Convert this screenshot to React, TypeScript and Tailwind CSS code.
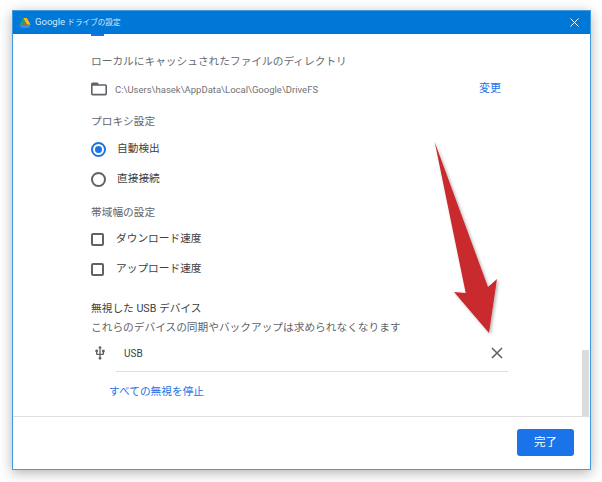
export default function App() {
  const t = "flex items-center text-[#5f6368] text-[10.7px]";
  return (
    <div className="w-[602px] h-[482px] bg-white pl-[12px] pt-[10px] overflow-hidden relative" style={{ fontFamily: 'Roboto, "Noto Sans CJK JP", sans-serif' }}>
      <div className="w-[579px] h-[460px] flex flex-col bg-white border border-[#3f9ae2] shadow-[0_3px_12px_rgba(0,0,0,0.3)]">
        <div className="h-[23px] shrink-0 bg-[#0078d7] flex items-center pl-[6px] pr-[11px]">
          <svg width="12" height="10" viewBox="0 0 24 21">
            <path d="M8 0h8l8 14h-8z" fill="#fbbc04" />
            <path d="M8 0l8 14-4 7L0 14z" fill="#1fa463" />
            <path d="M0 14l4 7h16l4-7z" fill="#4285f4" />
            <path d="M12 8l-4 6h8z" fill="#ea4335" opacity="0.8" />
          </svg>
          <span className="ml-[4px] text-[9.5px] text-[#d7e9f8] whitespace-nowrap">Google <span className="text-[7.6px]">ドライブの設定</span></span>
          <svg className="ml-auto" width="9" height="9" viewBox="0 0 9 9" stroke="#fff" strokeWidth="1">
            <path d="M0.5 0.5l8 8M8.5 0.5l-8 8" />
          </svg>
        </div>

        <div className="flex-1 min-h-0 flex">
          <div className="flex-1 pl-[78px] pr-[81px] flex flex-col">
            <div className="flex h-[2px]">
              <div className="w-[13px] h-[2px] bg-[#1a73e8]" />
            </div>
            <div className={`${t} h-[20px] mt-[16px] text-[#666a6e]`}>ローカルにキャッシュされたファイルのディレクトリ</div>
            <div className="h-[20px] mt-[7px] flex items-center">
              <svg width="16" height="16" viewBox="2 2 20 20" fill="#5f6368">
                <path d="M20 6h-8l-2-2H4c-1.1 0-1.99.9-1.99 2L2 18c0 1.1.9 2 2 2h16c1.1 0 2-.9 2-2V8c0-1.1-.9-2-2-2zm0 12H4V8h16v10z" />
              </svg>
              <span className="ml-[8px] pt-[2px] text-[9.5px] text-[#6f7276]">C:\Users\hasek\AppData\Local\Google\DriveFS</span>
              <span className="ml-auto text-[11px] text-[#1a73e8]">変更</span>
            </div>
            <div className={`${t} h-[20px] mt-[13px]`}>プロキシ設定</div>
            <div className="h-[20px] mt-[7px] flex items-center">
              <div className="w-[15px] h-[15px] rounded-full border-[2px] border-[#1a73e8] flex items-center justify-center">
                <div className="w-[7px] h-[7px] rounded-full bg-[#1a73e8]" />
              </div>
              <span className="ml-[11px] text-[10.7px] text-[#3c4043]">自動検出</span>
            </div>
            <div className="h-[20px] mt-[10px] flex items-center">
              <div className="w-[15px] h-[15px] rounded-full border-[2px] border-[#5f6368]" />
              <span className="ml-[11px] text-[10.7px] text-[#3c4043]">直接接続</span>
            </div>
            <div className={`${t} h-[20px] mt-[14px]`}>帯域幅の設定</div>
            <div className="h-[20px] mt-[6px] flex items-center">
              <div className="w-[13px] h-[13px] rounded-[2px] border-[2px] border-[#5f6368]" />
              <span className="ml-[12px] text-[10.7px] text-[#3c4043]">ダウンロード速度</span>
            </div>
            <div className="h-[20px] mt-[10px] flex items-center">
              <div className="w-[13px] h-[13px] rounded-[2px] border-[2px] border-[#5f6368]" />
              <span className="ml-[12px] text-[10.7px] text-[#3c4043]">アップロード速度</span>
            </div>
            <div className="h-[20px] mt-[20px] flex items-center text-[10.7px] text-[#3c4043]">無視した USB デバイス</div>
            <div className={`${t} h-[20px] -mt-px whitespace-nowrap`}>これらのデバイスの同期やバックアップは求められなくなります</div>
            <div className="h-[36px] -mt-[3px] flex items-center -mr-[7px]">
              <svg className="ml-[1px]" width="16" height="16" viewBox="3 0 18 24" fill="#5f6368">
                <path d="M15 7v4h1v2h-3V5h2l-3-4-3 4h2v8H8v-2.07c.7-.37 1.2-1.08 1.2-1.93 0-1.21-.99-2.2-2.2-2.2-1.21 0-2.2.99-2.2 2.2 0 .85.5 1.56 1.2 1.93V13c0 1.11.89 2 2 2h3v3.05c-.71.37-1.2 1.1-1.2 1.95 0 1.22.99 2.2 2.2 2.2 1.21 0 2.2-.98 2.2-2.2 0-.85-.49-1.58-1.2-1.95V15h3c1.11 0 2-.89 2-2v-2h1V7h-4z" />
              </svg>
              <span className="ml-[16px] text-[10px] text-[#3c4043]">USB</span>
              <svg className="ml-auto mr-[5px]" width="12" height="12" viewBox="0 0 12 12" stroke="#5f6368" strokeWidth="1.6">
                <path d="M1 1l10 10M11 1L1 11" />
              </svg>
            </div>
            <div className="h-px bg-[#e0e0e0] ml-[25px] -mr-[7px]" />
            <div className="h-[20px] mt-[10px] ml-[18px] flex items-center text-[10.7px] text-[#1a73e8]">すべての無視を停止</div>
          </div>
          <div className="w-[7px] mr-[1px] flex flex-col justify-end">
            <div className="h-[66px] bg-[#dcdcdc]" />
          </div>
        </div>

        <div className="h-[53px] shrink-0 border-t border-[#e0e0e0] flex items-center justify-end pr-[16px]">
          <button className="w-[57px] h-[27px] rounded-[3px] bg-[#1a73e8] text-white text-[11.5px] mb-[1px]">完了</button>
        </div>
      </div>

      <svg className="absolute left-[430px] top-[138px]" width="75" height="200" viewBox="430 138 75 200">
        <defs>
          <filter id="s" x="-30%" y="-10%" width="160%" height="120%">
            <feDropShadow dx="1.5" dy="1.5" stdDeviation="1.5" floodColor="#000" floodOpacity="0.3" />
          </filter>
        </defs>
        <polygon points="434.7,142 488,287 497,279 489,333 454,292 465.7,293" fill="#c82a2e" filter="url(#s)" />
      </svg>
    </div>
  );
}
